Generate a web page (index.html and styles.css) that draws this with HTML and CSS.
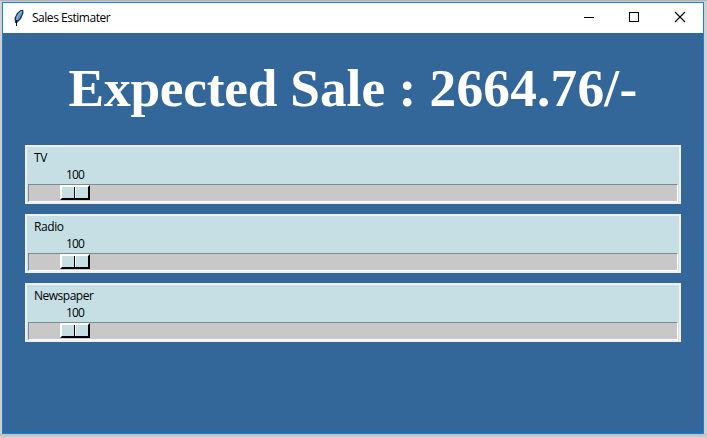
FILE: index.html
```html
<!DOCTYPE html>
<html lang="en">
<head>
<meta charset="utf-8">
<title>Sales Estimater</title>
<link rel="stylesheet" href="styles.css">
</head>
<body>
<div class="window">
  <header class="titlebar">
    <svg class="feather" width="12" height="18" viewBox="0 0 12 18">
      <path d="M2 14 L1.5 9 L4 4 L7.5 1 L10.3 .8 L10.5 4 L8 10 L4.5 13.5 Z" fill="#26313d"/>
      <path d="M3 11.5 L3 8 L5.5 4 L8.5 1.8 L9.5 2.5 L8.5 6 L6 10.5 Z" fill="#5b94d8"/>
      <path d="M8.5 2 L5 7 L3.5 12" fill="none" stroke="#a9c8ee" stroke-width=".7"/>
      <path d="M3.5 11 V17" stroke="#111" fill="none"/>
    </svg>
    <span class="title">Sales Estimater</span>
    <svg class="controls" width="102" height="12" viewBox="0 0 102 12" fill="none" stroke="#000">
      <path d="M0 6.5 H10" shape-rendering="crispEdges"/>
      <path d="M45.5 1.5 H54.5 V10.5 H45.5 Z" shape-rendering="crispEdges"/>
      <path d="M91 1 L101 11 M101 1 L91 11" stroke-width="1.1"/>
    </svg>
  </header>
  <main class="content">
    <h1><span class="caption">Expected </span>Sale : <span class="amount">2664.76/-</span></h1>
    <section class="scale">
      <div class="label">TV</div>
      <div class="value">100</div>
      <div class="trough"><div class="slider"><i></i><i></i></div></div>
    </section>
    <section class="scale">
      <div class="label">Radio</div>
      <div class="value">100</div>
      <div class="trough"><div class="slider"><i></i><i></i></div></div>
    </section>
    <section class="scale">
      <div class="label newspaper">Newspaper</div>
      <div class="value">100</div>
      <div class="trough"><div class="slider"><i></i><i></i></div></div>
    </section>
  </main>
</div>
</body>
</html>
```
FILE: styles.css
```css
* { box-sizing: border-box; }
body {
  margin: 0;
  width: 707px;
  height: 438px;
  padding: 2px 3px 4px 2px;
  overflow: hidden;
  background: linear-gradient(#abb5c6 0 1px, #c8cdd6 1px 2px, #d0d0d0 2px 434px, #bcbcbc 434px, #d4d4d4 438px);
  font: 12px/16px "Open Sans", "Noto Sans", sans-serif;
  color: #000;
}
.window {
  width: 702px;
  height: 432px;
  border: 1px solid #1883d7;
  background: #336699;
}
.titlebar {
  height: 30px;
  display: flex;
  align-items: center;
  background: #fff;
  padding: 0 17px 0 10px;
}
.feather { margin-right: 7px; flex: none; }
.title { white-space: nowrap; letter-spacing: -0.47px; }
.controls { margin-left: auto; flex: none; position: relative; top: -1px; }
.content {
  display: flex;
  flex-direction: column;
  gap: 10px;
  padding: 25px 22px 0;
}
h1 {
  margin: 0 0 17px;
  height: 60px;
  font: bold 53.33px/60px "Liberation Serif", serif;
  color: #fff;
  text-align: center;
  white-space: nowrap;
}
.caption { letter-spacing: -0.22px; }
.amount { letter-spacing: 0.22px; }
.scale {
  height: 59px;
  border: 2px solid #f0f0f0;
  background: #c5dfe5;
  padding: 3px 1px 0;
}
.label { height: 17px; padding-left: 6px; letter-spacing: -0.4px; }
.newspaper { letter-spacing: -0.5px; }
.value { height: 17px; padding-left: 38px; letter-spacing: -0.8px; }
.trough {
  height: 18px;
  border: 1px solid;
  border-color: #7b8c91 #fff #fff #7b8c91;
  background: #c8c8c8;
  padding-left: 31px;
}
.slider {
  display: flex;
  width: 30px;
  height: 15px;
  border: 2px solid;
  border-color: #fff #000 #000 #fff;
}
.slider i { flex: 1; background: #c5dfe5; }
.slider i:first-child { border-right: 1px solid #000; }
.slider i:last-child { border-left: 1px solid #fff; }
```
